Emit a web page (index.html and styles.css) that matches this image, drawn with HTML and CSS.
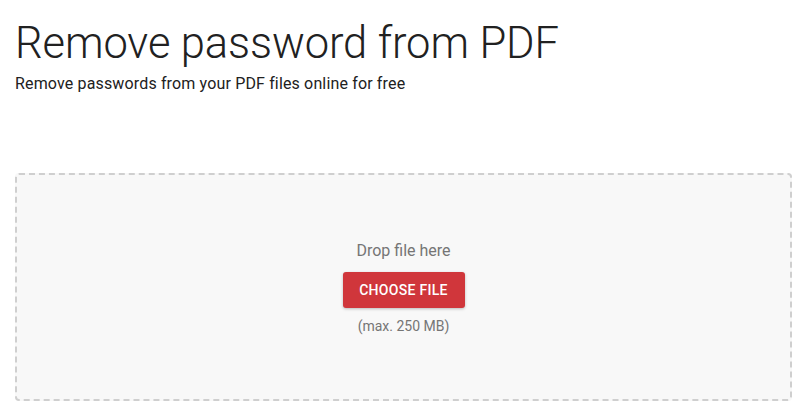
FILE: index.html
```html
<!DOCTYPE html>
<html lang="en">
<head>
<meta charset="utf-8">
<title>Remove password from PDF</title>
<link rel="stylesheet" href="styles.css">
</head>
<body>
<main class="page">
  <header class="intro">
    <h1 class="title">Remove password from PDF</h1>
    <p class="subtitle">Remove passwords from your PDF files online for free</p>
  </header>
  <section class="dropzone">
    <p class="drop-label">Drop file here</p>
    <button class="choose-btn" type="button">Choose file</button>
    <p class="limit">(max. 250 MB)</p>
  </section>
</main>
</body>
</html>
```

FILE: styles.css
```css
* { box-sizing: border-box; }
html, body { margin: 0; padding: 0; background: #fff; }
body {
  font-family: Roboto, "Noto Sans", sans-serif;
  color: #212121;
}
.page {
  padding: 16px 10px 0 15px;
}
.intro {
  display: flex;
  flex-direction: column;
}
.title {
  margin: 0;
  font-weight: 300;
  font-size: 43.5px;
  line-height: 56px;
  color: #212121;
  letter-spacing: -0.1px;
}
.subtitle {
  margin: 0;
  font-size: 16px;
  line-height: 23px;
  letter-spacing: 0.15px;
  color: #212121;
}
.dropzone {
  margin-top: 78px;
  height: 228px;
  border: 2px dashed #cfcfcf;
  border-radius: 4px;
  background: #f8f8f8;
  display: flex;
  flex-direction: column;
  align-items: center;
  justify-content: center;
  padding-top: 2px;
}
.drop-label {
  margin: 0;
  font-size: 16px;
  line-height: 20px;
  color: #757575;
}
.choose-btn {
  margin-top: 11px;
  width: 122px;
  height: 36px;
  border: 0;
  border-radius: 3px;
  background: #d0363b;
  color: #fff;
  font-family: Roboto, "Noto Sans", sans-serif;
  font-weight: 500;
  font-size: 14px;
  letter-spacing: 0.3px;
  text-transform: uppercase;
  box-shadow: 0 1px 3px rgba(0,0,0,0.25);
}
.limit {
  margin: 9px 0 0;
  font-size: 14px;
  line-height: 18px;
  color: #757575;
}
```
